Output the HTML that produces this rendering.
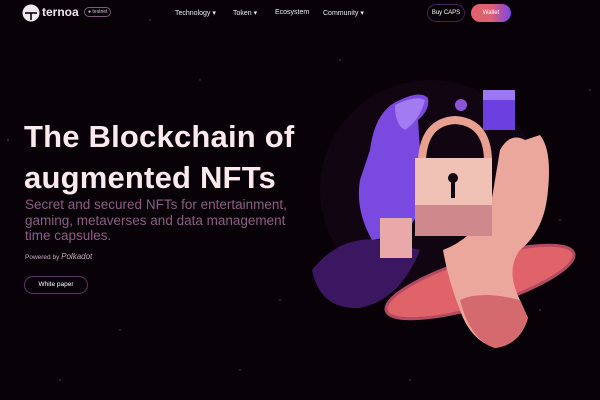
<!DOCTYPE html>
<html><head><meta charset="utf-8"><style>
*{margin:0;padding:0;box-sizing:border-box}
body{width:600px;height:400px;overflow:hidden;background:#080208;font-family:"Liberation Sans",sans-serif;position:relative;color:#fff}
.abs{position:absolute}
.nav{font-size:7px;color:#eee;top:9px}
h1{position:absolute;left:24px;top:116px;font-size:31px;line-height:41px;font-weight:bold;color:#fbe9ee;letter-spacing:0.2px}
.sub{position:absolute;left:25px;top:197px;font-size:13.5px;line-height:15.5px;color:#8e5d85;width:268px}
</style></head><body>
<svg class="abs" style="left:0;top:0" width="600" height="400">
<g fill="#6a4a6a">
<circle cx="8" cy="140" r="0.8"/><circle cx="150" cy="20" r="0.7"/><circle cx="590" cy="90" r="0.7"/><circle cx="560" cy="220" r="0.7"/><circle cx="120" cy="330" r="0.7"/><circle cx="240" cy="370" r="0.7"/><circle cx="410" cy="380" r="0.7"/><circle cx="200" cy="80" r="0.7"/><circle cx="340" cy="60" r="0.7"/><circle cx="540" cy="310" r="0.7"/><circle cx="60" cy="380" r="0.7"/><circle cx="280" cy="300" r="0.7"/>
</g>
<ellipse cx="430" cy="190" rx="110" ry="110" fill="#2a0f2e" opacity="0.25"/>
<path d="M312 270 Q340 235 380 240 L420 250 Q400 300 360 308 Q320 310 312 270Z" fill="#3a1760"/>
<path d="M370 150 Q375 110 400 100 Q420 90 428 98 Q430 110 418 120 L420 150 Q415 175 430 185 Q420 220 400 235 L372 240 Q355 210 360 180Z" fill="#7a4ae0"/>
<path d="M395 105 Q415 95 425 100 Q420 120 405 130 Q395 125 395 105Z" fill="#a37bf0"/>
<ellipse cx="480" cy="282" rx="98" ry="24" transform="rotate(-17 480 282)" fill="#e0636a"/>
<ellipse cx="480" cy="282" rx="98" ry="24" transform="rotate(-17 480 282)" fill="none" stroke="#b24a62" stroke-width="3"/>
<path d="M443 250 Q470 240 490 210 L500 150 Q510 132 525 140 L540 135 Q552 150 548 190 Q545 230 520 250 Q505 270 520 300 L528 318 Q520 345 495 348 Q470 340 460 310 Q448 280 443 250Z" fill="#eba79c"/>
<path d="M460 300 Q480 290 520 300 L528 318 Q520 345 495 348 Q470 340 460 300Z" fill="#d56a6e"/>
<path d="M422 160 Q424 122 455 120 Q487 122 488 160" fill="none" stroke="#e8a090" stroke-width="8"/>
<rect x="415" y="158" width="77" height="78" fill="#f0c2b5"/>
<rect x="415" y="205" width="77" height="31" fill="#c0707a" opacity="0.7"/>
<circle cx="453" cy="178" r="5" fill="#120410"/>
<rect x="451" y="178" width="4" height="20" fill="#120410"/>
<rect x="483" y="90" width="32" height="40" fill="#6b3fe0"/>
<rect x="483" y="90" width="32" height="10" fill="#9b78f0"/>
<rect x="380" y="218" width="32" height="40" fill="#e8a9a8"/>
<circle cx="461" cy="105" r="6" fill="#8a55d8"/>
</svg>
<svg class="abs" style="left:22px;top:4px" width="18" height="18"><circle cx="9" cy="9" r="8.5" fill="#f3e8ef"/><path d="M3 9 h12" stroke="#080208" stroke-width="1.6"/><path d="M9 9 v7" stroke="#080208" stroke-width="1.6"/></svg>
<div class="abs" style="left:42px;top:5px;font-size:12px;font-weight:bold;color:#f1e6ee">ternoa</div>
<div class="abs" style="left:84px;top:7px;width:27px;height:10px;border:1px solid #7a5a78;border-radius:6px;font-size:5px;color:#ccc;padding:1px 3px;white-space:nowrap">● testnet</div>
<div class="abs nav" style="left:175px">Technology ▾</div>
<div class="abs nav" style="left:233px">Token ▾</div>
<div class="abs nav" style="left:275px">Ecosystem</div>
<div class="abs nav" style="left:323px">Community ▾</div>
<div class="abs" style="left:427px;top:4px;width:38px;height:18px;border:1px solid #3d2455;border-radius:9px;font-size:6px;text-align:center;line-height:16px">Buy CAPS</div>
<div class="abs" style="left:471px;top:4px;width:40px;height:18px;border-radius:9px;background:linear-gradient(90deg,#e0606e,#e06070 50%,#7a46e8);font-size:6px;text-align:center;line-height:18px">Wallet</div>
<h1>The Blockchain of<br>augmented NFTs</h1>
<div class="sub">Secret and secured NFTs for entertainment, gaming, metaverses and data management time capsules.</div>
<div class="abs" style="left:25px;top:252px;font-size:6.5px;color:#c8a8c0">Powered by <i style="font-size:8px">Polkadot</i></div>
<div class="abs" style="left:24px;top:276px;width:64px;height:18px;border:1px solid #5a3560;border-radius:9px;font-size:6.5px;text-align:center;line-height:16px">White paper</div>
</body></html>
